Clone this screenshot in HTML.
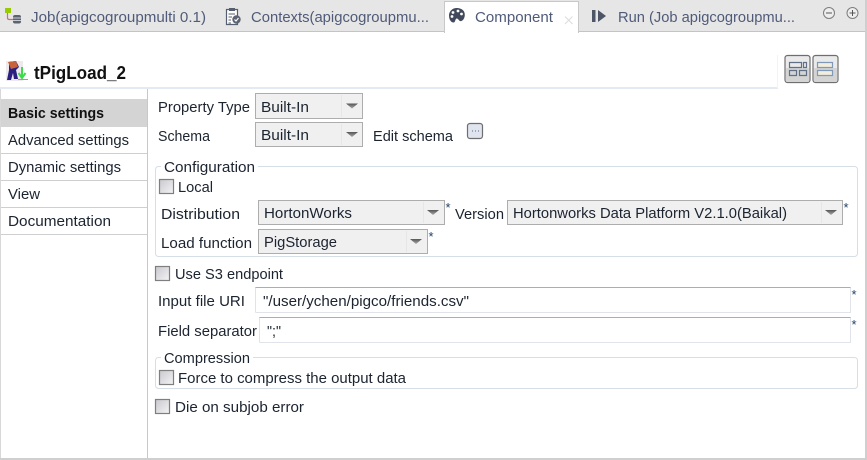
<!DOCTYPE html>
<html><head><meta charset="utf-8"><style>
html,body{margin:0;padding:0;background:#fff;width:867px;height:460px;overflow:hidden}
svg{display:block;position:absolute;left:0;top:0}
text{font-family:"Liberation Sans",sans-serif;font-size:14.5px;fill:#1c2430;white-space:pre}
.t{fill:#4f5b78}
</style></head><body>
<svg width="867" height="460" viewBox="0 0 867 460" xmlns="http://www.w3.org/2000/svg">
<defs>
<linearGradient id="cb" x1="0" y1="0" x2="1" y2="1"><stop offset="0" stop-color="#c9c9ce"/><stop offset="1" stop-color="#f4f4f6"/></linearGradient>
<linearGradient id="ar" x1="0" y1="0" x2="0" y2="1"><stop offset="0" stop-color="#555"/><stop offset="1" stop-color="#aaa"/></linearGradient>
</defs>
<rect width="867" height="460" fill="#fff"/>
<!-- tab bar -->
<rect x="0" y="0" width="867" height="31" fill="#e6e6e6"/>
<rect x="0" y="31" width="867" height="1" fill="#c4c4c4"/>
<rect x="444.500" y="1.500" width="134" height="31" fill="#fff" stroke="#c8c8c8"/>
<rect x="445" y="31" width="133" height="2" fill="#fff"/>
<!-- outer borders -->
<rect x="865" y="0" width="2" height="460" fill="#cfcfcf"/>
<rect x="0" y="458" width="867" height="2" fill="#cfcfcf"/>
<rect x="0" y="88" width="1" height="370" fill="#d8d8d8"/>
<!-- job icon -->
<rect x="5" y="8" width="6" height="5" fill="#9c0"/>
<path d="M7.500 13V18Q7.500 19.500 9.500 19.500H13" fill="none" stroke="#d0706f" stroke-width="1.200"/>
<rect x="13" y="15" width="8" height="8.500" rx="2" fill="#5d6270"/>
<path d="M13 18H21M13 20.500H21" stroke="#c8ccd4"/>
<text class="t" x="31" y="22" textLength="175" lengthAdjust="spacingAndGlyphs">Job(apigcogroupmulti 0.1)</text>
<!-- contexts icon -->
<path d="M226.500 9.500H237.500V24.500H226.500Z" fill="#fff" stroke="#555f70" stroke-width="1.200"/>
<rect x="229" y="8" width="6" height="3" fill="#555f70"/>
<path d="M228.500 14H235M228.500 17H232M228.500 20H231M228.500 23H231" stroke="#555f70"/>
<circle cx="236.500" cy="19.500" r="4.200" fill="#5d6575"/>
<path d="M234.500 19.500L236 21L238.500 18" fill="none" stroke="#fff" stroke-width="1.100"/>
<text class="t" x="251" y="22" textLength="178" lengthAdjust="spacingAndGlyphs">Contexts(apigcogroupmu...</text>
<!-- palette icon -->
<path d="M457 8C451.500 8 449 12 449 15.500C449 19.500 451 22.500 453.500 22.500C455.500 22.500 455 19 456.500 18.500C458.500 18 459 22 461.500 21C465 19.500 465.500 14 464 11.500C462.500 9 459.500 8 457 8Z" fill="#414a5c"/>
<circle cx="453" cy="12.500" r="1.400" fill="#fff"/><circle cx="458" cy="11" r="1.400" fill="#fff"/><circle cx="461.500" cy="14" r="1.400" fill="#fff"/><circle cx="452" cy="16.500" r="1.400" fill="#fff"/>
<text class="t" x="475" y="22" textLength="78" lengthAdjust="spacingAndGlyphs">Component</text>
<path d="M565 16.500L572.500 24M572.500 16.500L565 24" stroke="#dcdcdc" stroke-width="1"/>
<!-- run icon -->
<rect x="592" y="10" width="3.500" height="12" fill="#4d5666"/>
<path d="M598 10L606 16L598 22Z" fill="#4d5666"/>
<text class="t" x="618" y="22" textLength="177" lengthAdjust="spacingAndGlyphs">Run (Job apigcogroupmu...</text>
<!-- min/max -->
<circle cx="829" cy="13" r="5.500" fill="#eee" stroke="#7d7d7d"/><path d="M826 13H832" stroke="#555"/>
<circle cx="852.500" cy="13" r="5.500" fill="#eee" stroke="#7d7d7d"/><path d="M849.500 13H855.500M852.500 10V16" stroke="#555"/>
<!-- header -->
<rect x="0" y="87" width="778" height="2" fill="#e3eaf2"/>
<rect x="777" y="55" width="1" height="33" fill="#f0f3f7"/>
<!-- pig icon -->
<rect x="6" y="61" width="17" height="20" fill="#eeeaec"/>
<path d="M9 62L16 61L19 67L16 70L18 79L14 79L13 73L11 80L7 80L9 70Z" fill="#2b2080"/>
<path d="M8 62L16 61L18 67L11 69Z" fill="#c8623a"/>
<path d="M22 67V77M18.500 73L22 78L25.500 73" fill="none" stroke="#3ddc4a" stroke-width="2"/>
<rect x="18" y="79" width="10" height="1" fill="#3ddc4a"/>
<text x="34" y="79" textLength="92" lengthAdjust="spacingAndGlyphs" style="font-size:18px;font-weight:bold;fill:#111">tPigLoad_2</text>
<!-- layout buttons -->
<g>
<rect x="785" y="55.500" width="25" height="27" rx="2.500" fill="#eaeaea" stroke="#6e6e6e" stroke-width="1.200"/>
<rect x="786" y="68" width="23" height="14" rx="1" fill="#d4d4d4"/>
<path d="M789.500 62.500H801.500V67.500H789.500ZM803.500 62.500H806.500V67.500H803.500ZM789.500 70.500H796.500V75.500H789.500ZM799.500 70.500H806.500V75.500H799.500Z" fill="none" stroke="#5f7088" stroke-width="1.200"/>
<rect x="813" y="55.500" width="25" height="27" rx="2.500" fill="#eaeaea" stroke="#6e6e6e" stroke-width="1.200"/>
<rect x="814" y="68" width="23" height="14" rx="1" fill="#d4d4d4"/>
<path d="M817.500 62.500H832.500V67.500H817.500ZM817.500 70.500H832.500V75.500H817.500Z" fill="#f3eedc" stroke="#7f9ab8" stroke-width="1.200"/>
</g>
<!-- sidebar -->
<rect x="147" y="89" width="1" height="369" fill="#c8c8c8"/>
<rect x="1" y="99" width="146" height="28" fill="#d4d4d4"/>
<path d="M1 153.500H147M1 180.500H147M1 207.500H147M1 234.500H147" stroke="#cfcfcf"/>
<text x="8" y="118" textLength="96" lengthAdjust="spacingAndGlyphs" style="font-weight:bold;fill:#111">Basic settings</text>
<text x="8" y="145" textLength="121" lengthAdjust="spacingAndGlyphs">Advanced settings</text>
<text x="8" y="172" textLength="113" lengthAdjust="spacingAndGlyphs">Dynamic settings</text>
<text x="8" y="199" textLength="32" lengthAdjust="spacingAndGlyphs">View</text>
<text x="8" y="226" textLength="103" lengthAdjust="spacingAndGlyphs">Documentation</text>
<!-- property type -->
<text x="158" y="112" textLength="92" lengthAdjust="spacingAndGlyphs">Property Type</text>
<rect x="255.500" y="93.500" width="107" height="25" fill="#f0f0f0" stroke="#adadad"/>
<rect x="341" y="95" width="1" height="22" fill="#e6e6e6"/>
<path d="M346 103.500H358L352 108.500Z" fill="url(#ar)"/>
<text x="261" y="112" textLength="48" lengthAdjust="spacingAndGlyphs">Built-In</text>
<!-- schema -->
<text x="158" y="141" textLength="52" lengthAdjust="spacingAndGlyphs">Schema</text>
<rect x="255.500" y="122.500" width="107" height="24" fill="#f0f0f0" stroke="#adadad"/>
<rect x="341" y="124" width="1" height="21" fill="#e6e6e6"/>
<path d="M346 132H358L352 137Z" fill="url(#ar)"/>
<text x="261" y="140" textLength="48" lengthAdjust="spacingAndGlyphs">Built-In</text>
<text x="373" y="141" textLength="80" lengthAdjust="spacingAndGlyphs">Edit schema</text>
<rect x="467.500" y="123.500" width="15" height="15" rx="2.500" fill="#dfe4ee" stroke="#6e6e6e" stroke-width="1.200"/>
<path d="M472 131H473M475 131H476M478 131H479" stroke="#5b6a85"/>
<!-- configuration group -->
<rect x="155.500" y="166.500" width="702" height="90" rx="3" fill="none" stroke="#d6dee6"/>
<rect x="161" y="160" width="97" height="12" fill="#fff"/>
<text x="164" y="172" textLength="91" lengthAdjust="spacingAndGlyphs">Configuration</text>
<rect x="159.500" y="179.500" width="14" height="14" fill="url(#cb)" stroke="#7f7f7f" stroke-width="1.200"/>
<text x="178" y="192" textLength="35" lengthAdjust="spacingAndGlyphs">Local</text>
<text x="161" y="219" textLength="79" lengthAdjust="spacingAndGlyphs">Distribution</text>
<rect x="258.500" y="200.500" width="186" height="24" fill="#f0f0f0" stroke="#adadad"/>
<rect x="423" y="202" width="1" height="21" fill="#e6e6e6"/>
<path d="M427 210H439L433 215Z" fill="url(#ar)"/>
<text x="264" y="218" textLength="88" lengthAdjust="spacingAndGlyphs">HortonWorks</text>
<text x="445.500" y="212" style="font-size:13px;fill:#1f3f66">*</text>
<text x="455" y="219" textLength="49" lengthAdjust="spacingAndGlyphs">Version</text>
<rect x="507.500" y="200.500" width="335" height="24" fill="#f0f0f0" stroke="#adadad"/>
<rect x="821" y="202" width="1" height="21" fill="#e6e6e6"/>
<path d="M825 210H837L831 215Z" fill="url(#ar)"/>
<text x="513" y="218" textLength="274" lengthAdjust="spacingAndGlyphs">Hortonworks Data Platform V2.1.0(Baikal)</text>
<text x="843.500" y="212" style="font-size:13px;fill:#1f3f66">*</text>
<text x="161" y="248" textLength="91" lengthAdjust="spacingAndGlyphs">Load function</text>
<rect x="258.500" y="229.500" width="169" height="24" fill="#f0f0f0" stroke="#adadad"/>
<rect x="406" y="231" width="1" height="21" fill="#e6e6e6"/>
<path d="M410 239H422L416 244Z" fill="url(#ar)"/>
<text x="264" y="247" textLength="73" lengthAdjust="spacingAndGlyphs">PigStorage</text>
<text x="428.500" y="241" style="font-size:13px;fill:#1f3f66">*</text>
<!-- s3 -->
<rect x="155.500" y="266.500" width="14" height="14" fill="url(#cb)" stroke="#7f7f7f" stroke-width="1.200"/>
<text x="175" y="279" textLength="108" lengthAdjust="spacingAndGlyphs">Use S3 endpoint</text>
<!-- input -->
<text x="158" y="306" textLength="87" lengthAdjust="spacingAndGlyphs">Input file URI</text>
<path d="M255.500 312.500V287.500H850.500V312.500H255.500" fill="#fff" stroke="#e0e4ea"/>
<path d="M255.500 287.500H850.500" stroke="#adadad"/>
<text x="263" y="306" textLength="206" lengthAdjust="spacingAndGlyphs">"/user/ychen/pigco/friends.csv"</text>
<text x="851.500" y="299" style="font-size:13px;fill:#1f3f66">*</text>
<text x="158" y="336" textLength="99" lengthAdjust="spacingAndGlyphs">Field separator</text>
<path d="M259.500 342.500V317.500H850.500V342.500H259.500" fill="#fff" stroke="#e0e4ea"/>
<path d="M259.500 317.500H850.500" stroke="#adadad"/>
<text x="267" y="336" textLength="14" lengthAdjust="spacingAndGlyphs">";"</text>
<text x="851.500" y="329" style="font-size:13px;fill:#1f3f66">*</text>
<!-- compression -->
<rect x="155.500" y="357.500" width="702" height="31" rx="3" fill="none" stroke="#d6dee6"/>
<rect x="161" y="351" width="92" height="12" fill="#fff"/>
<text x="164" y="363" textLength="86" lengthAdjust="spacingAndGlyphs">Compression</text>
<rect x="159.500" y="370.500" width="14" height="14" fill="url(#cb)" stroke="#7f7f7f" stroke-width="1.200"/>
<text x="178" y="383" textLength="228" lengthAdjust="spacingAndGlyphs">Force to compress the output data</text>
<!-- die -->
<rect x="155.500" y="399.500" width="14" height="14" fill="url(#cb)" stroke="#7f7f7f" stroke-width="1.200"/>
<text x="175" y="412" textLength="129" lengthAdjust="spacingAndGlyphs">Die on subjob error</text>
</svg>
</body></html>
